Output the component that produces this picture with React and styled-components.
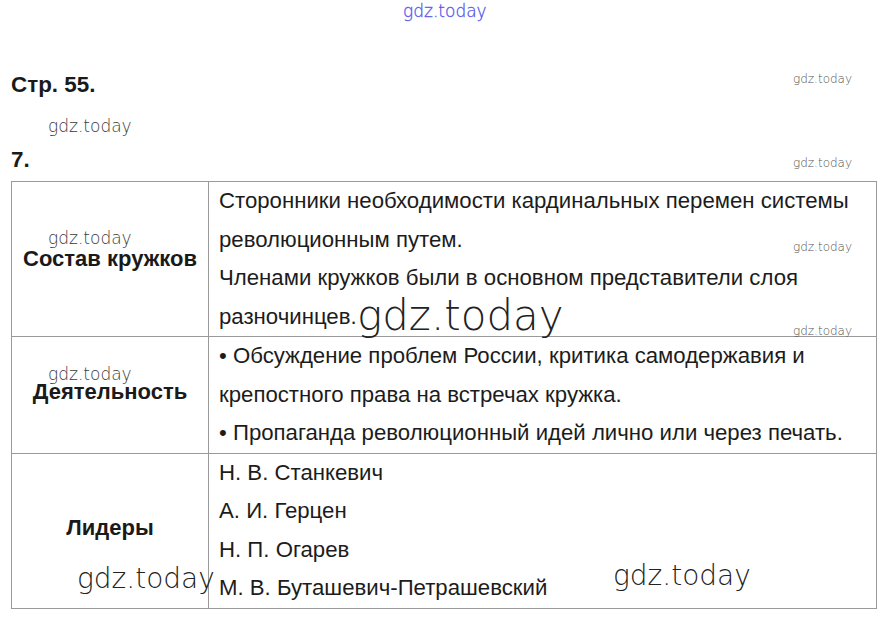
import styled, { createGlobalStyle } from "styled-components";

const Global = createGlobalStyle`
  html, body {
    margin: 0;
    padding: 0;
    background: #ffffff;
  }
  body {
    font-family: "Liberation Sans", Arial, sans-serif;
    color: #1a1a1a;
  }
`;

/* ===== Page ===== */
const Page = styled.div`
  position: relative;
  width: 887px;
  height: 626px;
  padding: 73px 11px 0 11px;
  box-sizing: border-box;
  overflow: hidden;
`;

const Heading = styled.div`
  font-size: 22.4px;
  font-weight: 700;
  line-height: 24px;
  margin-bottom: ${({ gap }) => gap}px;
`;

/* ===== Table ===== */
const Table = styled.table`
  width: 866px;
  border-collapse: collapse;
  table-layout: fixed;
`;

const LabelCell = styled.td`
  width: 196px;
  border: 1px solid #9a9a9a;
  text-align: center;
  vertical-align: middle;
  font-weight: 700;
  font-size: 22px;
  padding: 0 0 ${({ lift }) => lift || 0}px 0;
`;

const TextCell = styled.td`
  border: 1px solid #9a9a9a;
  padding: 0 0 0 10px;
  vertical-align: top;
  font-size: 22.2px;
  line-height: 38.5px;
  white-space: nowrap;
  color: #1c1c1c;
`;

const Line = styled.div``;

/* ===== Watermarks ===== */
const Mark = styled.span`
  position: absolute;
  left: ${({ x }) => x}px;
  top: ${({ y }) => y}px;
  font-family: "DejaVu Sans", sans-serif;
  font-weight: 200;
  font-size: ${({ size }) => size}px;
  line-height: 1;
  color: ${({ tone }) => tone || "#3a3a3a"};
  white-space: nowrap;
  pointer-events: none;
`;

const Logo = styled(Mark)`
  color: #4545e0;
  -webkit-text-stroke: 0.3px #6a6af0;
`;

export default function App() {
  return (
    <Page>
      <Global />
      <Logo x={403} y={3} size={17}>gdz.today</Logo>

      <Heading gap={51}>Стр. 55.</Heading>
      <Heading gap={9}>7.</Heading>

      <Table>
        <tbody>
          <tr>
            <LabelCell>Состав кружков</LabelCell>
            <TextCell>
              <Line>Сторонники необходимости кардинальных перемен системы</Line>
              <Line>революционным путем.</Line>
              <Line>Членами кружков были в основном представители слоя</Line>
              <Line>разночинцев.</Line>
            </TextCell>
          </tr>
          <tr>
            <LabelCell lift={6}>Деятельность</LabelCell>
            <TextCell>
              <Line>• Обсуждение проблем России, критика самодержавия и</Line>
              <Line>крепостного права на встречах кружка.</Line>
              <Line>• Пропаганда революционный идей лично или через печать.</Line>
            </TextCell>
          </tr>
          <tr>
            <LabelCell lift={6}>Лидеры</LabelCell>
            <TextCell>
              <Line>Н. В. Станкевич</Line>
              <Line>А. И. Герцен</Line>
              <Line>Н. П. Огарев</Line>
              <Line>М. В. Буташевич-Петрашевский</Line>
            </TextCell>
          </tr>
        </tbody>
      </Table>

      <Mark x={793} y={73} size={12} tone="#555">gdz.today</Mark>
      <Mark x={793} y={157} size={12} tone="#555">gdz.today</Mark>
      <Mark x={793} y={241} size={12} tone="#555">gdz.today</Mark>
      <Mark x={793} y={325} size={12} tone="#555">gdz.today</Mark>
      <Mark x={48} y={118} size={17}>gdz.today</Mark>
      <Mark x={48} y={230} size={17}>gdz.today</Mark>
      <Mark x={48} y={366} size={17}>gdz.today</Mark>
      <Mark x={357} y={295} size={42} tone="#222">gdz.today</Mark>
      <Mark x={77} y={565} size={28} tone="#222">gdz.today</Mark>
      <Mark x={613} y={562} size={28} tone="#222">gdz.today</Mark>
    </Page>
  );
}
